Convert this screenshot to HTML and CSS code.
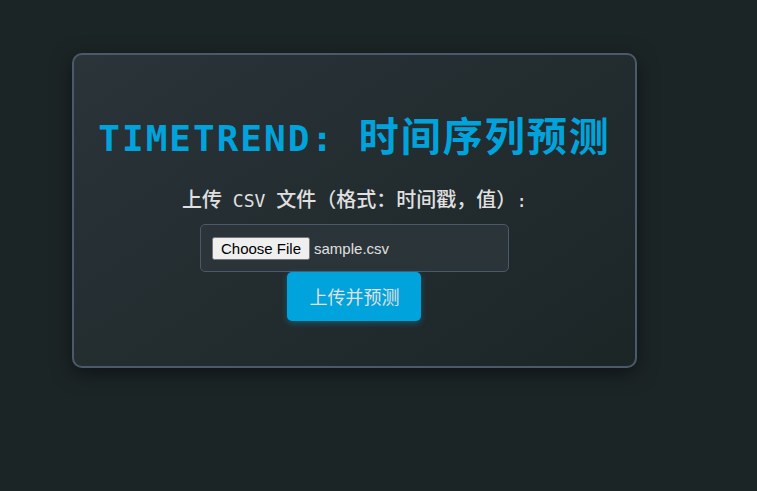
FILE: index.html
```html
<!DOCTYPE html>
<html lang="zh-CN">
<head>
<meta charset="utf-8">
<meta name="viewport" content="width=device-width, initial-scale=1">
<title>TimeTrend</title>
<link rel="stylesheet" href="styles.css">
</head>
<body>
<main class="card">
  <h1 class="title"><span class="latin">TIMETREND: </span>时间序列预测</h1>
  <form class="form">
    <label class="label" for="file">上传<span class="latin"> CSV </span>文件（格式：时间戳，值）<span class="latin">:</span></label>
    <input class="file" type="file" id="file" name="file" accept=".csv">
    <button class="submit" type="submit">上传并预测</button>
  </form>
</main>
<script src="script.js"></script>
</body>
</html>
```
FILE: styles.css
```css
* {
  box-sizing: border-box;
}

body {
  display: flex;
  justify-content: center;
  align-items: flex-start;
  min-height: 100vh;
  margin: 0;
  padding: 53px 48px 24px 0;
  background: #1c2526;
  color: #e0e0e0;
  font-family: "DejaVu Sans Mono", "Noto Sans CJK SC", monospace;
}

.card {
  padding: 52px 24px 45px;
  border: 2px solid #4a5a6a;
  border-radius: 10px;
  background: linear-gradient(145deg, #2a3439, #1c2526);
  box-shadow: 0 5px 20px rgba(0, 0, 0, 0.5);
  text-align: center;
}

.title {
  margin: 0 0 16px;
  color: #00a3dc;
  font-size: 40px;
  line-height: 60px;
  font-weight: 700;
  letter-spacing: 2px;
}

.title .latin {
  font-size: 36px;
}

.form {
  display: flex;
  flex-direction: column;
  align-items: center;
}

.label {
  margin-bottom: 8px;
  font-size: 20px;
  line-height: 30px;
  font-weight: 500;
}

.label .latin {
  font-size: 18px;
}

.file {
  width: 309px;
  max-width: 100%;
  height: 48px;
  padding: 12px 11px;
  border: 1px solid #4a5a6a;
  border-radius: 5px;
  background: #2a3439;
  color: #e0e0e0;
  font: 15px "Liberation Sans", sans-serif;
}

.file::file-selector-button {
  padding: 1px 7px;
}

.submit {
  padding: 12px 22px;
  border: 0;
  border-radius: 5px;
  background: #00a3dc;
  box-shadow: 0 2px 6px rgba(0, 163, 220, 0.4);
  color: #e0e0e0;
  font: 18px/25px "Noto Sans CJK SC", sans-serif;
}
```
FILE: script.js
```js
const transfer = new DataTransfer();
transfer.items.add(new File(["timestamp,value\n"], "sample.csv", { type: "text/csv" }));
document.getElementById("file").files = transfer.files;
```
